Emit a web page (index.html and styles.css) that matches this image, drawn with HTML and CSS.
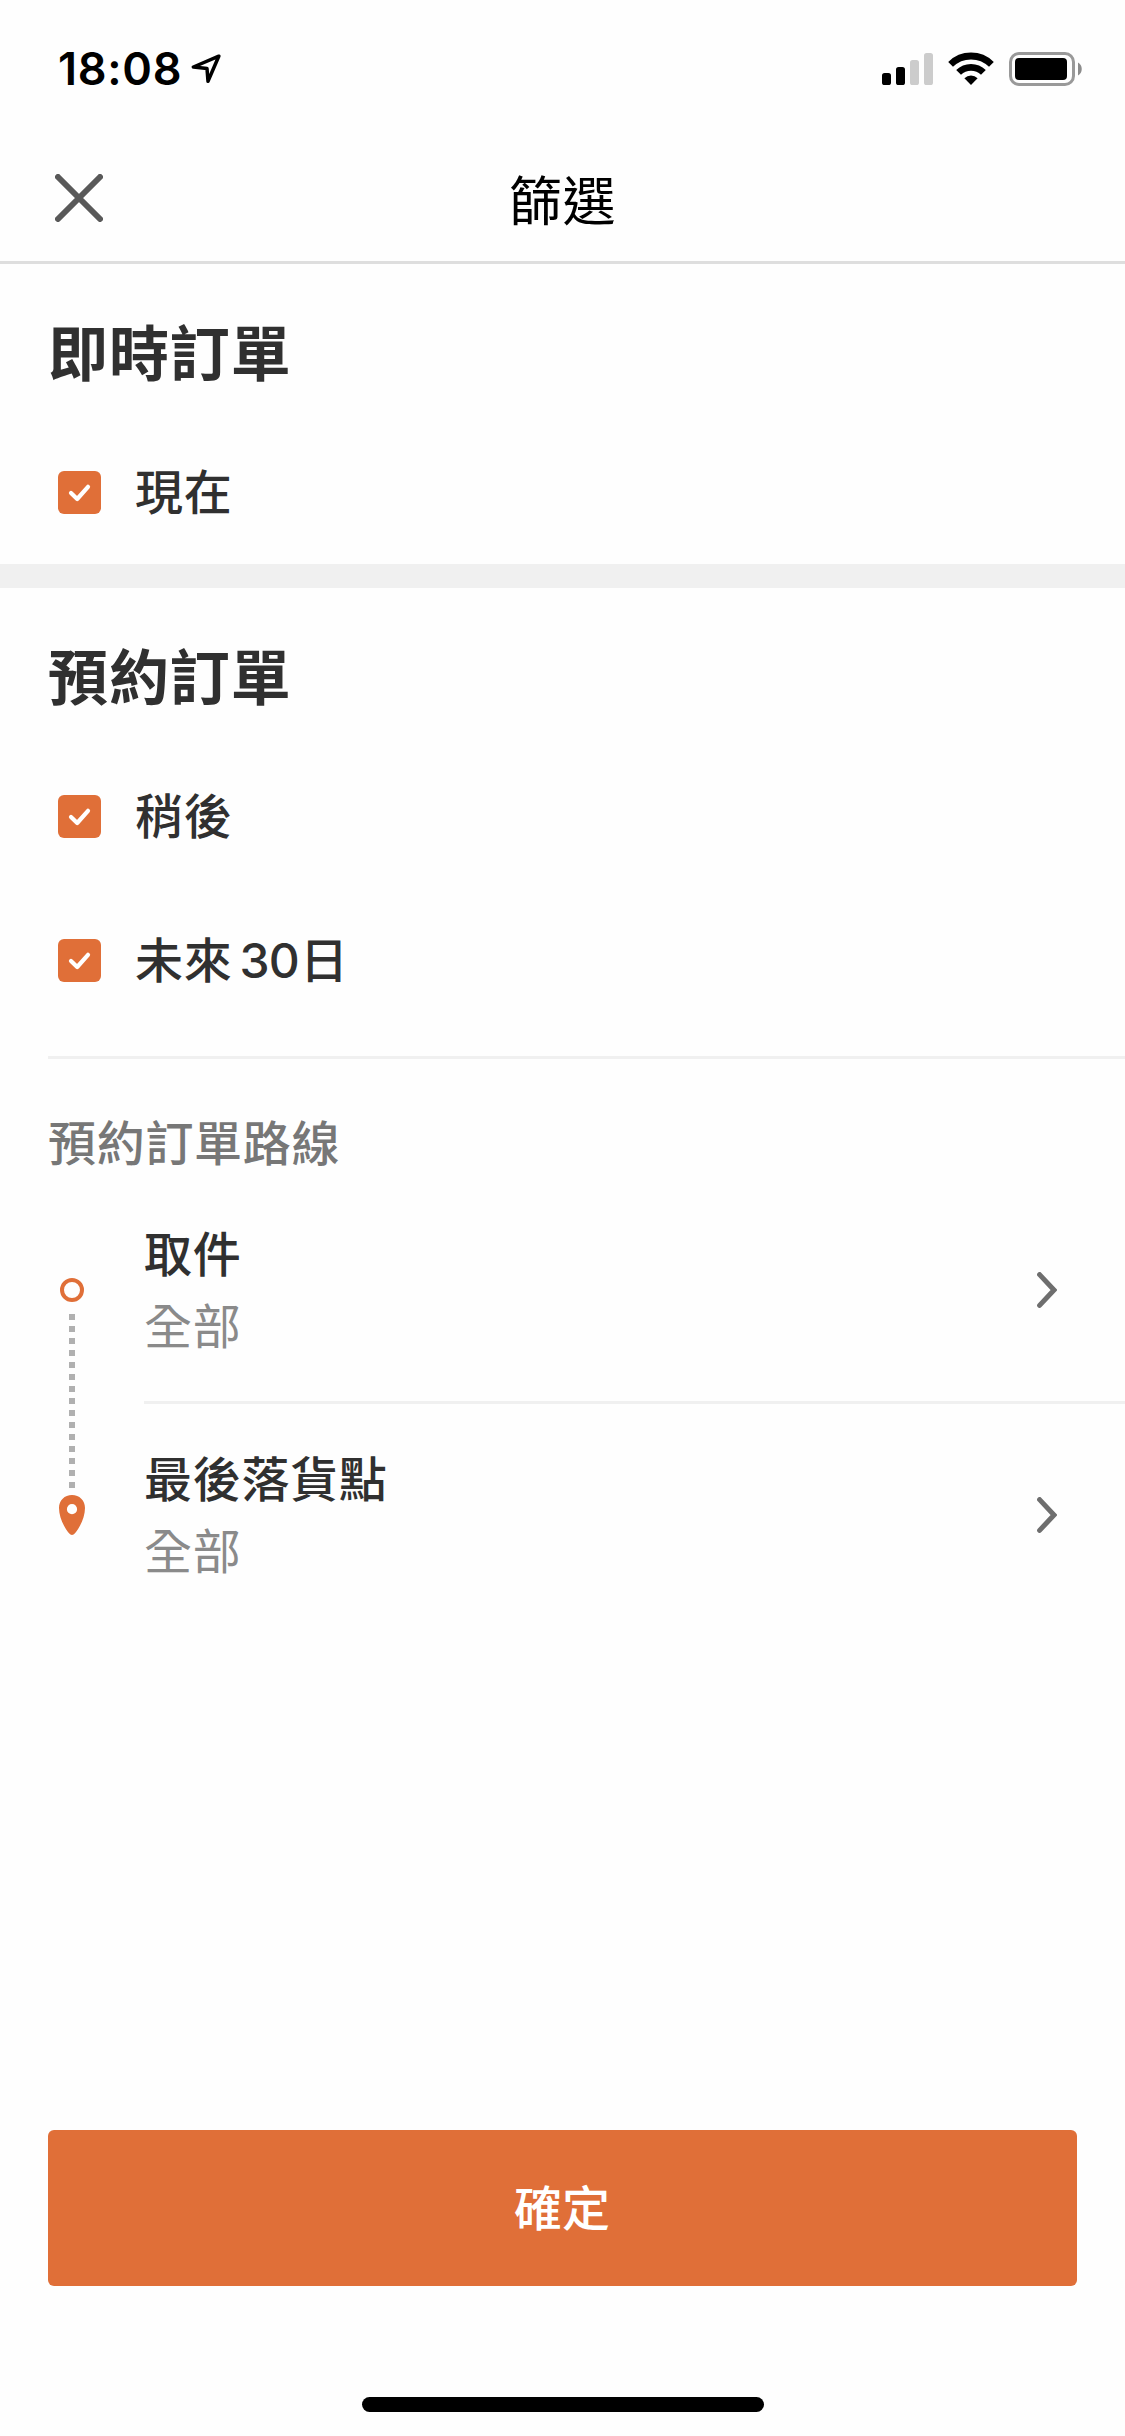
FILE: index.html
```html
<!DOCTYPE html>
<html lang="zh-Hant">
<head>
<meta charset="utf-8">
<title>篩選</title>
<link rel="stylesheet" href="styles.css">
</head>
<body>
<svg class="defs" aria-hidden="true">
  <symbol id="checkbox" viewBox="0 0 43 43">
    <rect width="43" height="43" rx="6" fill="#e06f38"/>
    <path d="M13 22l6.2 6L30 15.8" fill="none" stroke="#fff" stroke-width="4.2" stroke-linecap="round" stroke-linejoin="round"/>
  </symbol>
  <symbol id="chevron" viewBox="0 0 20 36">
    <path d="M2.6 2.6L17 18L2.6 33.4" fill="none" stroke="#6e6e6e" stroke-width="5" stroke-linecap="round"/>
  </symbol>
</svg>
<div class="screen">
  <div class="status">
    <div class="status-left">
      <span class="time">18:08</span>
      <svg class="location" viewBox="0 0 30 30"><path d="M27.8 2.2L2.4 13L16 14.6L17 27.3Z" fill="none" stroke="#000" stroke-width="3.5" stroke-linejoin="round"/></svg>
    </div>
    <div class="status-right">
      <svg class="signal" viewBox="0 0 51 34">
        <rect x="0" y="21" width="9" height="12" rx="2.6"/>
        <rect x="14" y="15" width="9" height="18" rx="2.6"/>
        <rect x="28" y="8" width="9" height="25" rx="2.6" fill="#ccc"/>
        <rect x="42" y="1" width="9" height="32" rx="2.6" fill="#ccc"/>
      </svg>
      <svg class="wifi" viewBox="0 0 46 34">
        <g fill="none" stroke="#000" stroke-width="6.8">
          <path d="M2.6 12.4A29 29 0 0 1 43.4 12.4"/>
          <path d="M10.6 20.4A17.6 17.6 0 0 1 35.4 20.4"/>
        </g>
        <path d="M23 33L16.4 26.2A9.4 9.4 0 0 1 29.6 26.2Z"/>
      </svg>
      <svg class="battery" viewBox="0 0 73 34">
        <rect x="1.5" y="1.5" width="63" height="31" rx="8.5" fill="none" stroke="#999" stroke-width="3"/>
        <rect x="6" y="6" width="52" height="22" rx="4"/>
        <path d="M69 10.5a7.5 7.5 0 0 1 0 13z" fill="#8c8c8c"/>
      </svg>
    </div>
  </div>
  <header class="nav">
    <svg class="close" viewBox="0 0 48 48"><path d="M3 3L45 45M45 3L3 45" stroke="#595959" stroke-width="6" stroke-linecap="round"/></svg>
    <h1 class="title">篩選</h1>
  </header>
  <main class="content">
    <section class="section">
      <h2 class="heading">即時訂單</h2>
      <label class="option"><svg class="box"><use href="#checkbox"/></svg><span class="option-text">現在</span></label>
    </section>
    <section class="section section-later">
      <h2 class="heading">預約訂單</h2>
      <label class="option"><svg class="box"><use href="#checkbox"/></svg><span class="option-text">稍後</span></label>
      <label class="option"><svg class="box"><use href="#checkbox"/></svg><span class="option-text">未來<span class="days">30</span>日</span></label>
    </section>
    <section class="routes">
      <h3 class="label">預約訂單路線</h3>
      <div class="route">
        <div class="rail">
          <div class="ring"></div>
          <div class="dots"></div>
          <svg class="pin" viewBox="0 0 26 40"><path fill="#e06f38" fill-rule="evenodd" d="M13 0C5.6 0 0 5.4 0 13C0 22 4.8 32 10 38.2Q13 41.6 16 38.2C21.2 32 26 22 26 13C26 5.4 20.4 0 13 0ZM13 9.1a5.1 5.1 0 1 1 0 10.2a5.1 5.1 0 1 1 0-10.2Z"/></svg>
        </div>
        <div class="stops">
          <div class="stop">
            <div class="stop-text"><div class="name">取件</div><div class="value">全部</div></div>
            <svg class="chevron"><use href="#chevron"/></svg>
          </div>
          <div class="stop">
            <div class="stop-text"><div class="name">最後落貨點</div><div class="value">全部</div></div>
            <svg class="chevron"><use href="#chevron"/></svg>
          </div>
        </div>
      </div>
    </section>
  </main>
  <footer class="footer">
    <button class="confirm">確定</button>
    <div class="home"></div>
  </footer>
</div>
</body>
</html>
```
FILE: styles.css
```css
* { box-sizing: border-box; }
body { margin: 0; background: #fff; }
svg { display: block; flex: none; }
.defs { width: 0; height: 0; position: absolute; }
h1, h2, h3 { margin: 0; }

.screen {
  width: 1125px;
  height: 2436px;
  display: flex;
  flex-direction: column;
  background: #fefefe;
  color: #303030;
  font-family: Inter, "Noto Sans CJK TC", sans-serif;
  font-size: 48px;
  line-height: 72px;
  letter-spacing: 0.7px;
}

.status {
  height: 132px;
  padding: 6px 43px 0 58px;
  display: flex;
  justify-content: space-between;
  align-items: center;
  color: #000;
}
.status-left { display: flex; align-items: center; gap: 9px; }
.time { font-size: 45px; font-weight: 600; letter-spacing: 0.7px; }
.location { width: 30px; height: 30px; }
.status-right { display: flex; align-items: center; gap: 15px; }
.signal { width: 51px; height: 34px; }
.wifi { width: 46px; height: 34px; }
.battery { width: 73px; height: 34px; }

.nav {
  height: 132px;
  padding: 3px 55px 0;
  display: grid;
  grid-template-columns: 48px 1fr 48px;
  align-items: center;
  border-bottom: 3px solid #dedede;
}
.close { width: 48px; height: 48px; }
.title {
  padding-top: 7px;
  color: #000;
  font-size: 53px;
  font-weight: 400;
  text-align: center;
}

.section { border-bottom: 24px solid #f0f0f0; }
.heading {
  height: 156px;
  padding: 24px 48px 0;
  font-size: 60px;
  font-weight: 700;
  line-height: 132px;
  letter-spacing: 0.9px;
}
.option {
  height: 144px;
  padding-left: 58px;
  display: flex;
  align-items: center;
  gap: 34px;
  font-weight: 500;
}
.option-text { padding-top: 2px; }
.box { width: 43px; height: 43px; }
.days { margin: 0 1px 0 7px; letter-spacing: -0.8px; }
.section-later { border: 0; padding-bottom: 24px; }

.label {
  height: 123px;
  margin-left: 48px;
  padding-top: 49px;
  border-top: 3px solid #f0f0f0;
  color: #777;
  font-size: 48px;
  font-weight: 500;
}
.route { display: grid; grid-template-columns: 144px 1fr; }
.rail {
  padding-top: 99px;
  display: flex;
  flex-direction: column;
  align-items: center;
}
.ring { width: 24px; height: 24px; border: 4px solid #e06f38; border-radius: 50%; }
.dots {
  width: 6px;
  height: 174px;
  margin: 12px 0 7px;
  background: repeating-linear-gradient(#b0b0b0 0 6px, transparent 6px 12px);
}
.pin { width: 26px; height: 40px; }
.stop {
  height: 222px;
  padding-right: 68px;
  display: flex;
  justify-content: space-between;
  align-items: center;
}
.stop + .stop { height: 225px; border-top: 3px solid #f0f0f0; }
.name { font-weight: 500; }
.stop-text { padding-top: 1px; }
.value { color: #8a8a8a; font-weight: 400; }
.chevron { width: 20px; height: 36px; }

.footer {
  margin-top: auto;
  padding: 0 48px 24px;
  display: flex;
  flex-direction: column;
  align-items: center;
  gap: 111px;
}
.confirm {
  width: 100%;
  height: 156px;
  padding: 1px 1px 0 0;
  border: 0;
  border-radius: 6px;
  background: #e06f38;
  color: #fff;
  font: inherit;
  font-weight: 500;
  letter-spacing: 0;
}
.home { width: 402px; height: 15px; border-radius: 8px; background: #000; }
```
